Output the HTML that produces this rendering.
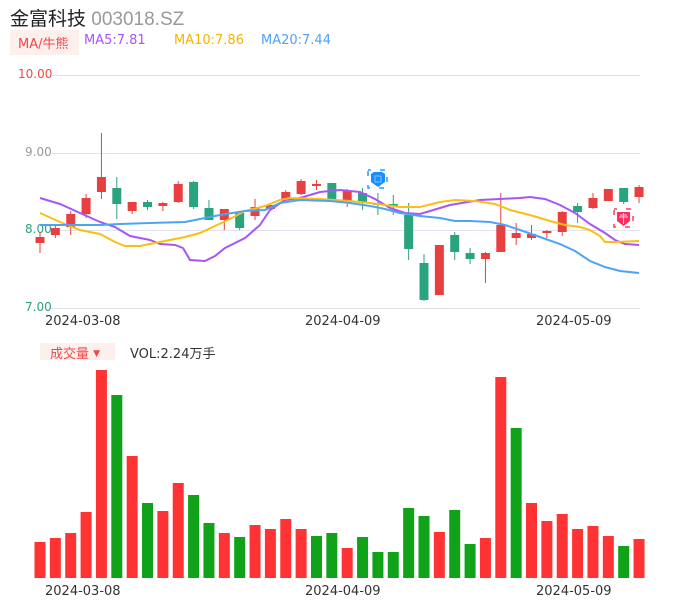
<!DOCTYPE html>
<html><head><meta charset="utf-8"><style>
html,body{margin:0;padding:0;background:#fff;width:686px;height:606px;overflow:hidden}
body{font-family:"DejaVu Sans","Noto Sans CJK SC",sans-serif;position:relative}
.t{position:absolute;white-space:nowrap}
</style></head><body>
<div class="t" style="left:10px;top:4px;font-size:19px;color:#222;font-family:'Liberation Sans','Noto Sans CJK SC',sans-serif">金富科技 <span style="color:#999;font-size:19px">003018.SZ</span></div>
<div class="t" style="left:10px;top:30px;width:69px;height:25px;background:#fdf0ec"></div>
<div class="t" style="left:18px;top:33px;font-size:13px;color:#f04848">MA/牛熊</div>
<div class="t" style="left:84px;top:33px;font-size:13px;color:#a855f7">MA5:7.81</div>
<div class="t" style="left:174px;top:33px;font-size:13px;color:#f5b400">MA10:7.86</div>
<div class="t" style="left:261px;top:33px;font-size:13px;color:#4fa3f7">MA20:7.44</div>
<div class="t" style="left:18px;top:67px;font-size:12px;color:#f04848">10.00</div>
<div class="t" style="left:25px;top:145px;font-size:12px;color:#999">9.00</div>
<div class="t" style="left:25px;top:222px;font-size:12px;color:#2aa37f">8.00</div>
<div class="t" style="left:25px;top:300px;font-size:12px;color:#2aa37f">7.00</div>
<div class="t" style="left:45px;top:314px;font-size:13px;color:#333">2024-03-08</div>
<div class="t" style="left:305px;top:314px;font-size:13px;color:#333">2024-04-09</div>
<div class="t" style="left:536px;top:314px;font-size:13px;color:#333">2024-05-09</div>
<div class="t" style="left:40px;top:343px;width:75px;height:17px;background:#fdf0ec"></div>
<div class="t" style="left:50px;top:343px;font-size:13px;color:#f04848">成交量 <span style="font-size:9px;vertical-align:2px">▼</span></div>
<div class="t" style="left:130px;top:343px;font-size:13px;color:#333">VOL:2.24万手</div>
<div class="t" style="left:45px;top:584px;font-size:13px;color:#333">2024-03-08</div>
<div class="t" style="left:305px;top:584px;font-size:13px;color:#333">2024-04-09</div>
<div class="t" style="left:536px;top:584px;font-size:13px;color:#333">2024-05-09</div>
<svg width="686" height="606" style="position:absolute;left:0;top:0">
<g stroke="#e0e3ef" stroke-width="1">
<line x1="52" y1="75.5" x2="640" y2="75.5"/><line x1="52" y1="153.5" x2="640" y2="153.5"/>
<line x1="52" y1="230.5" x2="640" y2="230.5"/><line x1="52" y1="308.5" x2="640" y2="308.5"/>
</g>
<g id="c"></g>
<polyline fill="none" stroke="#a855f7" stroke-width="2" points="40,198 60,204 80,213 100,222 115,227 130,236 150,240 160,244 175,245 183,248 190,260 205,261 215,256 225,248 245,238 260,225 270,210 285,200 300,198 320,192 340,190 360,192 375,199 390,208 405,213 420,214 430,211 450,205 480,200 500,199 520,198 530,197 545,199 560,205 575,213 590,224 605,233 615,240 625,244 639,245"/>
<polyline fill="none" stroke="#fbbf14" stroke-width="2" points="40,213 60,222 80,230 100,234 115,242 125,246 140,246 160,242 185,237 200,233 215,226 230,219 245,211 265,206 280,200 290,198 320,199 350,201 370,203 385,205 400,207 420,207 440,202 455,200 475,201 495,204 510,210 530,215 550,221 565,225 580,227 590,230 600,236 605,242 615,242 639,241"/>
<polyline fill="none" stroke="#4fa3f7" stroke-width="2" points="40,225 60,225 80,225 100,225 120,224 150,223 185,222 200,219 220,215 245,211 265,210 280,203 300,200 330,201 350,203 370,206 385,209 400,213 420,216 440,218 455,221 470,221 490,222 505,225 520,230 540,237 560,244 575,251 590,261 605,267 620,271 639,273"/>
<g>
<rect x="368" y="170" width="19" height="18" fill="none" stroke="#1aa0ff" stroke-width="1.5" stroke-dasharray="5 9" stroke-dashoffset="2"/>
<path d="M371,174 L374,172 L382,172 L385,174 L385,182 L378,187 L371,182 Z" fill="#1a8cff"/>
<rect x="375" y="176" width="6" height="6" fill="none" stroke="#7cc4ff" stroke-width="1"/>
<rect x="614" y="209" width="19" height="18" fill="none" stroke="#ff3b6b" stroke-width="1.5" stroke-dasharray="5 9" stroke-dashoffset="2"/>
<path d="M617,212 L630,212 L630,221 L623.5,226 L617,221 Z" fill="#ff2d5e"/>
<path d="M619,217 H628 M623.5,213 V224 M620,215 H627" stroke="#ffd0dc" stroke-width="1"/>
</g>
<g id="v"></g>
</svg>
<script>
var R="#e84040",G="#2aa37f",VR="#ff3333",VG="#10a31a";
var c=[[R,237,243,232,253],[R,228,235,224,238],[R,214,227,211,235],[R,198,214,194,218],[R,177,192,133,199],[G,188,204,177,219],[R,202,211,202,214],[G,202,207,200,210],[R,203,206,202,211],[R,184,202,181,203],[G,182,207,181,209],[G,208,220,200,220],[R,209,220,209,230],[G,213,228,211,230],[R,207,216,199,220],[R,205,209,205,211],[R,192,199,190,199],[R,181,194,179,195],[R,184,186,180,190],[G,183,201,183,201],[R,191,203,189,207],[G,193,203,188,210],[G,203,205,193,215],[G,204,205,195,215],[G,215,249,203,260],[G,263,300,254,301],[R,245,295,245,295],[G,235,252,232,260],[G,253,259,248,264],[R,253,259,252,283],[R,225,252,193,252],[R,233,238,223,245],[R,234,238,225,240],[R,231,233,230,238],[R,212,232,211,236],[G,206,212,203,223],[R,198,208,193,209],[R,189,201,189,201],[G,188,202,188,204],[R,187,197,185,203]];
var v=[[VR,542],[VR,538],[VR,533],[VR,512],[VR,370],[VG,395],[VR,456],[VG,503],[VR,511],[VR,483],[VG,495],[VG,523],[VR,533],[VG,537],[VR,525],[VR,529],[VR,519],[VR,529],[VG,536],[VG,533],[VR,548],[VG,537],[VG,552],[VG,552],[VG,508],[VG,516],[VR,532],[VG,510],[VG,544],[VR,538],[VR,377],[VG,428],[VR,503],[VR,521],[VR,514],[VR,529],[VR,526],[VR,536],[VG,546],[VR,539]];
var s="",t="";
for(var i=0;i<40;i++){var x=40+15.36*i,d=c[i];
s+='<line x1="'+x+'" x2="'+x+'" y1="'+d[3]+'" y2="'+d[4]+'" stroke="'+d[0]+'" stroke-width="1"/>';
s+='<rect x="'+(x-4.5)+'" y="'+d[1]+'" width="9" height="'+Math.max(2,d[2]-d[1])+'" fill="'+d[0]+'"/>';
t+='<rect x="'+(x-5.5)+'" y="'+v[i][1]+'" width="11" height="'+(578-v[i][1])+'" fill="'+v[i][0]+'"/>';}
document.getElementById("c").innerHTML=s;document.getElementById("v").innerHTML=t;
</script>
</body></html>
